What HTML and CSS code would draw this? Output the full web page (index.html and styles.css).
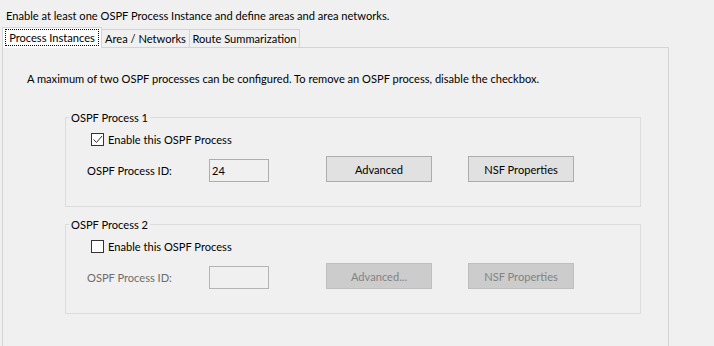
FILE: index.html
```html
<!DOCTYPE html>
<html>
<head>
    <meta charset="utf-8">
    <title>OSPF Process Instances</title>
    <link rel="stylesheet" href="styles.css">
</head>
<body>
    <div class="dialog">
        <p class="intro">Enable at least one OSPF Process Instance and define areas and area networks.</p>

        <div class="tabs">
            <div class="tab tab-active"><span class="focus">Process Instances</span></div>
            <div class="tab tab-2">Area / Networks</div>
            <div class="tab tab-3">Route Summarization</div>
        </div>

        <div class="panel">
            <p class="note">A maximum of two OSPF processes can be configured. To remove an OSPF process, disable the checkbox.</p>

            <fieldset class="group">
                <legend>OSPF Process 1</legend>
                <div class="group-body">
                    <label class="check-row">
                        <span class="checkbox">
                            <svg width="11" height="11" viewBox="0 0 11 11"><path d="M1.5 5.5 L4.5 8.5 L10 2" fill="none" stroke="#333" stroke-width="1"/></svg>
                        </span>
                        Enable this OSPF Process
                    </label>
                    <div class="id-row">
                        <span class="id-label">OSPF Process ID:</span>
                        <span class="field">24</span>
                        <button class="btn btn-advanced">Advanced</button>
                        <button class="btn btn-nsf">NSF Properties</button>
                    </div>
                </div>
            </fieldset>

            <fieldset class="group group-off">
                <legend>OSPF Process 2</legend>
                <div class="group-body">
                    <label class="check-row">
                        <span class="checkbox"></span>
                        Enable this OSPF Process
                    </label>
                    <div class="id-row">
                        <span class="id-label">OSPF Process ID:</span>
                        <span class="field"></span>
                        <button class="btn btn-advanced" disabled>Advanced...</button>
                        <button class="btn btn-nsf" disabled>NSF Properties</button>
                    </div>
                </div>
            </fieldset>
        </div>
    </div>
</body>
</html>
```

FILE: styles.css
```css
body {
    margin: 0;
    background: #f0f0f0;
    font-family: 'Lato', 'Liberation Sans', sans-serif;
    font-size: 11.1px;
    color: #000;
    overflow: hidden;
}

.dialog {
    width: 714px;
    height: 346px;
    overflow: hidden;
}

.intro {
    margin: 0;
    padding: 8px 0 0 6px;
    line-height: 15px;
}

.tabs {
    display: flex;
    align-items: flex-end;
    height: 20px;
    margin: 4px 0 0 2px;
}

.tab {
    box-sizing: border-box;
    height: 18px;
    line-height: 18px;
    text-align: center;
    white-space: nowrap;
    background: #f0f0f0;
    border-top: 1px solid #d4d4d4;
    border-right: 1px solid #d4d4d4;
}

.tab-active {
    position: relative;
    z-index: 1;
    width: 100px;
    height: 21px;
    margin-bottom: -1px;
    padding-top: 2px;
    line-height: 15px;
    background: #fdfdfd;
    border-left: 1px solid #d4d4d4;
}

.tab-active .focus {
    display: inline-block;
    padding: 0 3px;
    line-height: 15px;
    outline: 1px dotted #000;
}

.tab-2 {
    width: 88px;
}

.tab-3 {
    width: 110px;
}

.panel {
    box-sizing: border-box;
    width: 667px;
    height: 320px;
    margin-left: 2px;
    border: 1px solid #d4d4d4;
}

.note {
    margin: 0;
    padding: 23px 0 0 24px;
    line-height: 15px;
}

.group {
    box-sizing: border-box;
    width: 576px;
    margin: 24px 0 0 62px;
    padding: 0;
    border: 1px solid #dcdcdc;
}

.group + .group {
    margin-top: 10px;
}

.group legend {
    margin-left: 3px;
    padding: 0 2px;
    line-height: 15px;
}

.group-body {
    padding: 8px 0 24px 21px;
}

.check-row {
    display: flex;
    align-items: center;
    height: 13px;
    padding-left: 4px;
}

.checkbox {
    box-sizing: border-box;
    display: flex;
    align-items: center;
    justify-content: center;
    width: 13px;
    height: 13px;
    margin-right: 4px;
    border: 1px solid #333;
    background: #fff;
}

.id-row {
    display: flex;
    align-items: flex-end;
    height: 26px;
    margin-top: 10px;
}

.id-label {
    width: 122px;
    line-height: 23px;
}

.field {
    box-sizing: border-box;
    width: 60px;
    height: 23px;
    padding-left: 2px;
    line-height: 21px;
    border: 1px solid #adadad;
    background: #f0f0f0;
}

.btn {
    box-sizing: border-box;
    width: 106px;
    height: 26px;
    padding: 0;
    font-family: inherit;
    font-size: inherit;
    color: #000;
    background: #e1e1e1;
    border: 1px solid #adadad;
    border-radius: 0;
}

.btn-advanced {
    margin-left: 57px;
}

.btn-nsf {
    margin-left: 36px;
}

.btn:disabled {
    color: #838383;
    background: #cccccc;
    border-color: #bfbfbf;
}

.group-off .id-label {
    color: #6d6d6d;
}

.group-off .field {
    border-color: #b4b4b4;
}
```
